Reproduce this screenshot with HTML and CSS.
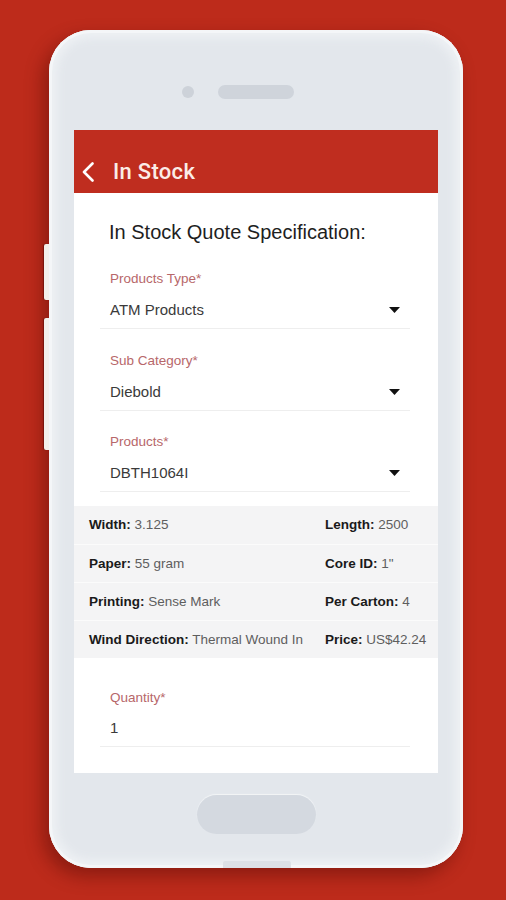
FILE: index.html
```html
<!DOCTYPE html>
<html lang="en">
<head>
<meta charset="utf-8">
<title>In Stock</title>
<link rel="stylesheet" href="styles.css">
</head>
<body>
<div class="stage">
  <div class="phone">
    <span class="side-btn side-btn-1"></span>
    <span class="side-btn side-btn-2"></span>
    <span class="bottom-notch"></span>
    <div class="phone-top">
      <span class="camera"></span>
      <span class="speaker"></span>
      <span></span>
    </div>
    <div class="screen">
      <div class="appbar">
        <svg class="back" width="12" height="20" viewBox="0 0 12 20"><polyline points="10.5,1.5 2,10 10.5,18.5" fill="none" stroke="#ffffff" stroke-width="2.6" stroke-linecap="round" stroke-linejoin="round"/></svg>
        <span class="appbar-title">In Stock</span>
      </div>
      <div class="form">
        <h1 class="form-title">In Stock Quote Specification:</h1>
        <div class="field">
          <div class="field-label">Products Type*</div>
          <div class="field-value"><span>ATM Products</span><svg class="caret" width="11" height="6" viewBox="0 0 11 6"><polygon points="0,0 11,0 5.5,6" fill="#111"/></svg></div>
        </div>
        <div class="field">
          <div class="field-label">Sub Category*</div>
          <div class="field-value"><span>Diebold</span><svg class="caret" width="11" height="6" viewBox="0 0 11 6"><polygon points="0,0 11,0 5.5,6" fill="#111"/></svg></div>
        </div>
        <div class="field">
          <div class="field-label">Products*</div>
          <div class="field-value"><span>DBTH1064I</span><svg class="caret" width="11" height="6" viewBox="0 0 11 6"><polygon points="0,0 11,0 5.5,6" fill="#111"/></svg></div>
        </div>
      </div>
      <div class="specs">
        <div class="spec-row"><span><b>Width:</b> 3.125</span><span><b>Length:</b> 2500</span></div>
        <div class="spec-row"><span><b>Paper:</b> 55 gram</span><span><b>Core ID:</b> 1"</span></div>
        <div class="spec-row"><span><b>Printing:</b> Sense Mark</span><span><b>Per Carton:</b> 4</span></div>
        <div class="spec-row"><span><b>Wind Direction:</b> Thermal Wound In</span><span><b>Price:</b> US$42.24</span></div>
      </div>
      <div class="form form-qty">
        <div class="field">
          <div class="field-label">Quantity*</div>
          <div class="field-value"><span>1</span></div>
        </div>
      </div>
    </div>
    <div class="phone-bottom">
      <span class="home-btn"></span>
    </div>
  </div>
</div>
</body>
</html>
```
FILE: styles.css
```css
html, body {
  margin: 0;
  padding: 0;
}
body {
  background: #bd2b1b;
  width: 506px;
  height: 900px;
  overflow: hidden;
  font-family: "Liberation Sans", Arial, sans-serif;
}
.stage {
  padding: 30px 0 0 49px;
}
.phone {
  position: relative;
  box-sizing: border-box;
  width: 414px;
  height: 838px;
  border-radius: 42px;
  background: #e3e7ec;
  padding: 0 25px;
  display: flex;
  flex-direction: column;
  box-shadow:
    inset 0 0 0 3px #f4f6f8,
    inset 0 0 10px 8px #eef1f4,
    -6px 8px 18px rgba(80, 8, 4, 0.45);
}
.side-btn {
  position: absolute;
  left: -5px;
  width: 5px;
  background: #f3efea;
  border-radius: 2px 0 0 2px;
  box-shadow: -1px 0 1px rgba(90, 10, 5, 0.6);
}
.side-btn-1 { top: 214px; height: 56px; }
.side-btn-2 { top: 288px; height: 132px; }
.bottom-notch {
  position: absolute;
  left: 174px;
  bottom: 0;
  width: 68px;
  height: 7px;
  background: #dde1e6;
  border-radius: 2px 2px 0 0;
}
.phone-top {
  height: 100px;
  box-sizing: border-box;
  padding-top: 55px;
  display: grid;
  grid-template-columns: 1fr 76px 1fr;
  align-items: start;
}
.camera {
  justify-self: end;
  margin-right: 24px;
  margin-top: 1px;
  width: 12px;
  height: 12px;
  border-radius: 50%;
  background: #cdd2d9;
}
.speaker {
  height: 14px;
  border-radius: 7px;
  background: #cfd4db;
}
.screen {
  height: 643px;
  background: #ffffff;
  overflow: hidden;
  display: flex;
  flex-direction: column;
}
.appbar {
  height: 63px;
  box-sizing: border-box;
  padding: 20px 0 0 8px;
  background: #bf2d1f;
  display: flex;
  align-items: center;
  gap: 19px;
  flex-shrink: 0;
}
.back {
  display: block;
}
.appbar-title {
  font-family: Roboto, "Liberation Sans", sans-serif;
  font-weight: 500;
  font-size: 22px;
  letter-spacing: 0.3px;
  color: #fbece7;
  line-height: 26px;
}
.form {
  padding: 27px 28px 0 26px;
}
.form-title {
  margin: 0 0 27px 0;
  padding-left: 9px;
  font-size: 20px;
  line-height: 24px;
  font-weight: normal;
  color: #1e1e1e;
}
.field + .field {
  margin-top: 23.5px;
}
.field-label {
  padding-left: 10px;
  font-size: 13.5px;
  line-height: 16px;
  color: #b7676a;
}
.field-value {
  margin-top: 13px;
  padding: 0 10px 8px 10px;
  border-bottom: 1px solid #eeeeee;
  display: flex;
  justify-content: space-between;
  align-items: center;
  font-size: 15px;
  line-height: 20px;
  color: #3a3a3a;
}
.caret {
  display: block;
}
.specs {
  margin-top: 14px;
  background: #f4f4f5;
}
.spec-row {
  height: 38px;
  box-sizing: border-box;
  padding-left: 15px;
  display: grid;
  grid-template-columns: 236px 1fr;
  align-items: center;
  font-size: 13.5px;
  line-height: 16px;
  color: #5e5e5e;
  white-space: nowrap;
}
.spec-row + .spec-row {
  border-top: 1px solid #fbfbfb;
}
.spec-row b {
  color: #1a1a1a;
}
.form-qty {
  padding-top: 32px;
}
.form-qty .field-value {
  margin-top: 12px;
}
.phone-bottom {
  padding-top: 22px;
  display: flex;
  justify-content: center;
}
.home-btn {
  width: 119px;
  height: 39px;
  border-radius: 20px;
  background: #d4d9e0;
  box-shadow: 0 -1px 1px #f3f5f7;
}
```
